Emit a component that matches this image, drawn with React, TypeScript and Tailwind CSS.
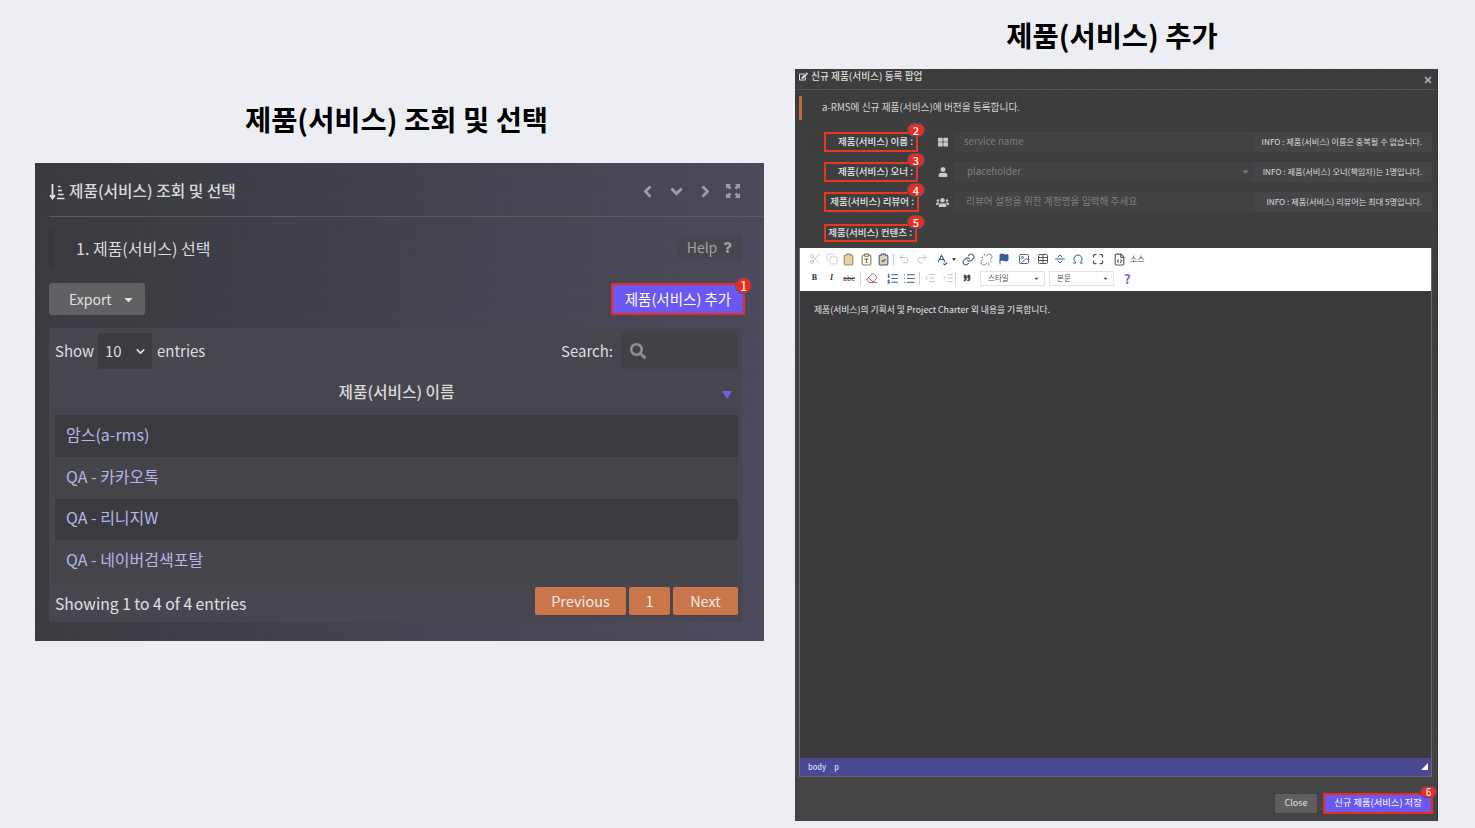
import React from "react";
import {
  Scissors, Copy, Clipboard, ClipboardType, ClipboardCheck, Undo2, Redo2, SpellCheck, Link, Unlink, Flag,
  Image, Table, SeparatorHorizontal, Omega, Maximize, FileCode, Eraser, ListOrdered, List, Outdent, Indent,
  ChevronDown, ChevronLeft, ChevronRight, Quote,
} from "lucide-react";
import { FaEdit, FaQuestion, FaSearch, FaThLarge, FaTimes, FaUser, FaUsers, FaCaretDown } from "react-icons/fa";

const FONT = "font-['Noto_Sans_CJK_KR','Noto_Sans',sans-serif]";

// Numbered red marker that sits over the highlighted controls
function Badge({ n, className }: { n: number; className: string }) {
  return (
    <span className={`absolute flex items-center justify-center rounded-full bg-[#e5301f] border border-[#4a4f86] text-white leading-none ${className}`}>
      {n}
    </span>
  );
}

function SortIcon() {
  return (
    <svg width="16" height="17" viewBox="0 0 16 17" fill="none" stroke="#e4e4e4">
      <path d="M3.5 1v14M1 12l2.5 3.5L6 12" strokeWidth="1.8" />
      <path d="M9 3.5h2.5M9 7.5h4M9 11.5h5.500M8 15.500h7.500" strokeWidth="1.6" />
    </svg>
  );
}

function ExpandIcon() {
  return (
    <svg width="14" height="14" viewBox="0 0 14 14" fill="#9c9ca4">
      <path d="M0 0h5L3.500 1.500 5.500 3.500 3.500 5.500 1.500 3.500 0 5zM14 0v5L12.500 3.500 10.500 5.500 8.500 3.500 10.500 1.500 9 0zM0 14V9l1.500 1.500 2-2 2 2-2 2L5 14zM14 14H9l1.500-1.500-2-2 2-2 2 2L14 9z" />
    </svg>
  );
}

function ProductList() {
  const rows = ["암스(a-rms)", "QA - 카카오톡", "QA - 리니지W", "QA - 네이버검색포탈"];
  return (
    <div className="w-[729px] h-[478px] bg-[radial-gradient(rgba(0,0,0,0.08)_1px,transparent_1px),linear-gradient(100deg,#3a3a3f,#4d4c5d)] bg-[length:3px_3px,100%_100%] pl-[14px] pr-[21px] text-[#d8d8d8]">
      <div className="h-[54px] mr-[-21px] pr-[24px] pt-[3px] flex items-center border-b border-[#5d5d58]">
        <SortIcon />
        <span className="ml-[4px] text-[15.75px] font-medium text-[#d9d9d9]">제품(서비스) 조회 및 선택</span>
        <div className="ml-auto flex items-center gap-[12px] text-[#9c9ca4]">
          <ChevronLeft size={17} strokeWidth={4} />
          <ChevronDown size={17} strokeWidth={4} />
          <ChevronRight size={17} strokeWidth={4} />
          <ExpandIcon />
        </div>
      </div>

      <div className="mt-[12px] h-[41px] flex items-center border-l-[5px] border-[#37373b] pl-[22px] pb-[4px]">
        <span className="text-[16px] text-[#dcdcdc]">1. 제품(서비스) 선택</span>
        <span className="ml-auto h-[25px] w-[66px] flex items-center justify-center gap-[5px] rounded bg-[#47464f] text-[14px] text-[#a2a2a2]">
          Help <FaQuestion size={11} />
        </span>
      </div>

      <div className="mt-[13px] flex items-center justify-between">
        <button className="w-[96px] h-[32px] flex items-center pl-[20px] gap-[10px] rounded-[3px] bg-[#616163] text-[14px] text-[#e0e0e0]">
          Export <FaCaretDown size={13} />
        </button>
        <button className="relative mr-[-2px] w-[134px] h-[32px] border-2 border-[#ee2a1e] bg-[#6a58f2] text-[14.5px] text-white">
          제품(서비스) 추가
          <Badge n={1} className="w-[17px] h-[17px] text-[13px] right-[-9px] top-[-8px]" />
        </button>
      </div>

      <div className="mt-[13px] h-[294px] rounded-[3px] bg-[#47464f] pl-[6px] pr-[5px]">
        <div className="pt-[5px] h-[41px] flex items-center text-[15px] text-[#dedede]">
          <span className="w-[43px]">Show</span>
          <span className="w-[54px] h-[36px] flex items-center justify-between bg-[#3c3c40] pl-[7px] pr-[5px] text-[#dcdcdc]">
            10 <ChevronDown size={13} strokeWidth={3} />
          </span>
          <span className="ml-[5px]">entries</span>
          <span className="ml-auto">Search:</span>
          <span className="ml-[8px] w-[117px] h-[36px] flex items-center rounded-[3px] bg-[#414146] pl-[9px] text-[#8f8f95]">
            <FaSearch size={16} />
          </span>
        </div>
        <div className="h-[46px] flex items-center justify-center relative text-[15.75px] font-medium text-[#dadada]">
          제품(서비스) 이름
          <span className="absolute right-[6px] top-[22px] w-0 h-0 border-x-[5px] border-x-transparent border-t-[8px] border-t-[#7660e0]" />
        </div>
        {rows.map((row, i) => (
          <div key={row} className={`h-[41.75px] flex items-center pl-[11px] pb-[4px] text-[16px] text-[#b5b7ea] ${i % 2 === 0 ? "bg-[#3b3b3f]" : "bg-[#454549]"}`}>
            {row}
          </div>
        ))}
        <div className="mt-[5px] flex items-center">
          <span className="pt-[5px] text-[15.7px] text-[#e0e0e0]">Showing 1 to 4 of 4 entries</span>
          <div className="ml-auto flex gap-[3px] text-[14.5px] text-[#f6ede6]">
            <span className="w-[91px] h-[28px] flex items-center justify-center rounded-[2px] bg-[#c8764a]">Previous</span>
            <span className="w-[41px] h-[28px] flex items-center justify-center rounded-[2px] bg-[#c8764a]">1</span>
            <span className="w-[65px] h-[28px] flex items-center justify-center rounded-[2px] bg-[#c8764a]">Next</span>
          </div>
        </div>
      </div>
    </div>
  );
}

function FormRow({
  label, n, icon, boxW, badgeCls, h, mt, input, inputPl, caret, info,
}: {
  label: string; n: number; icon?: React.ReactNode; boxW: string; badgeCls: string; h: string; mt: string; input?: string;
  inputPl?: string; caret?: boolean; info?: string;
}) {
  return (
    <div className={`flex items-center ${h} ${mt}`}>
      <div className="w-[129px] pl-[25px]">
        <div className={`relative ${h} ${boxW} border-2 border-[#e8361f] flex items-center justify-end pr-[3px] pb-[2px] text-[9.5px] font-medium text-[#e6e6e6]`}>
          {label} :
          <Badge n={n} className={`w-[18px] h-[14px] text-[11px] top-[-11px] ${badgeCls}`} />
        </div>
      </div>
      {icon && (
        <>
          <span className="w-[25px] pl-[4px] flex justify-center text-[#c9c9c9]">{icon}</span>
          <div className={`w-[301px] h-[20px] flex items-center pb-[2px] bg-[#424244] text-[9.7px] text-[#7f7f7f] ${inputPl}`}>
            <span>{input}</span>
            {caret && <FaCaretDown size={9} className="ml-auto mr-[4px]" />}
          </div>
          <div className="flex-1 h-[20px] flex items-center justify-end pb-[2px] bg-[#454547] pr-[10px] text-[8.2px] text-[#dcdcdc]">{info}</div>
        </>
      )}
    </div>
  );
}

function ToolIcon({ children, w, className = "" }: { children: React.ReactNode; w: string; className?: string }) {
  return <span className={`flex items-center justify-center shrink-0 ${w} ${className}`}>{children}</span>;
}

function Sep() {
  return <span className="w-px h-[13px] bg-[#cfcfcf] shrink-0" />;
}

function EditorToolbar() {
  return (
    <div className="h-[43px] bg-white px-[6px] pt-[4px]">
      <div className="h-[14px] flex items-center">
        <ToolIcon w="w-[17px]"><Scissors size={12} color="#c8c8c8" /></ToolIcon>
        <ToolIcon w="w-[17px]"><Copy size={12} color="#d2d2d2" /></ToolIcon>
        <ToolIcon w="w-[17px]"><Clipboard size={13} color="#a5895a" fill="#e3d3a8" /></ToolIcon>
        <ToolIcon w="w-[18px]"><ClipboardType size={13} color="#8a7750" /></ToolIcon>
        <ToolIcon w="w-[16px]"><ClipboardCheck size={13} color="#3d5a94" fill="#e3d3a8" /></ToolIcon>
        <span className="w-[2px]" />
        <Sep />
        <ToolIcon w="w-[18px]" className="ml-[1px]"><Undo2 size={12} color="#b7c4d9" /></ToolIcon>
        <ToolIcon w="w-[18px]"><Redo2 size={12} color="#c9c9c9" /></ToolIcon>
        <ToolIcon w="w-[21px]"><SpellCheck size={13} color="#33528f" /></ToolIcon>
        <span className="w-0 h-0 border-x-[2px] border-x-transparent border-t-[3px] border-t-[#444]" />
        <ToolIcon w="w-[20px]" className="ml-[2px]"><Link size={13} color="#4a5b80" /></ToolIcon>
        <ToolIcon w="w-[17px]"><Unlink size={13} color="#b39a92" /></ToolIcon>
        <ToolIcon w="w-[17px]"><Flag size={12} color="#3d5a94" fill="#3d5a94" /></ToolIcon>
        <ToolIcon w="w-[23px]"><Image size={12} color="#4e6a94" /></ToolIcon>
        <ToolIcon w="w-[16px]"><Table size={12} color="#555" /></ToolIcon>
        <ToolIcon w="w-[18px]"><SeparatorHorizontal size={12} color="#3d5a94" /></ToolIcon>
        <ToolIcon w="w-[18px]"><Omega size={12} color="#2f5597" /></ToolIcon>
        <ToolIcon w="w-[21px]"><Maximize size={12} color="#3c5070" strokeWidth={2.5} /></ToolIcon>
        <ToolIcon w="w-[22px]"><FileCode size={13} color="#555" /></ToolIcon>
        <span className="text-[8px] text-[#444]">소스</span>
      </div>
      <div className="mt-[5px] h-[14px] flex items-center">
        <ToolIcon w="w-[17px]"><b className="text-[8px] text-[#333] font-['Liberation_Serif',serif]">B</b></ToolIcon>
        <ToolIcon w="w-[17px]"><i className="text-[8px] text-[#333] font-['Liberation_Serif',serif] font-bold">I</i></ToolIcon>
        <ToolIcon w="w-[18px]"><span className="text-[7px] text-[#444] line-through">abc</span></ToolIcon>
        <span className="w-[2px]" />
        <Sep />
        <ToolIcon w="w-[22px]"><Eraser size={12} color="#c4605a" /></ToolIcon>
        <ToolIcon w="w-[18px]"><ListOrdered size={13} color="#3d5a94" /></ToolIcon>
        <ToolIcon w="w-[16px]"><List size={13} color="#3d5a94" /></ToolIcon>
        <span className="w-[2px]" />
        <Sep />
        <ToolIcon w="w-[20px]"><Outdent size={12} color="#bcc6d6" /></ToolIcon>
        <ToolIcon w="w-[15px]"><Indent size={12} color="#c8c8c8" /></ToolIcon>
        <Sep />
        <ToolIcon w="w-[22px]"><Quote size={8} color="#444" fill="#444" /></ToolIcon>
        <span className="ml-[2px] w-[65px] h-[15px] flex items-center border border-[#e2e2e2] pl-[7px] pr-[4px] text-[7.5px] text-[#555]">
          스타일 <FaCaretDown size={7} className="ml-auto" />
        </span>
        <span className="ml-[4px] w-[65px] h-[15px] flex items-center border border-[#e2e2e2] pl-[7px] pr-[4px] text-[7.5px] text-[#555]">
          본문 <FaCaretDown size={7} className="ml-auto" />
        </span>
        <span className="ml-[10px] text-[13px] font-bold leading-none text-[#8a5fc0]">?</span>
      </div>
    </div>
  );
}

function RegisterPopup() {
  return (
    <div className="w-[643px] h-[752px] flex flex-col border-r border-[#333] bg-[radial-gradient(rgba(0,0,0,0.1)_1px,transparent_1px),linear-gradient(#3d3d3d,#454545)] bg-[length:3px_3px,100%_100%] text-[#dcdcdc]">
      <div className="h-[21px] shrink-0 flex items-center border-b border-[#555] pl-[4px] pr-[4px] pb-[6px] text-[9.7px] font-medium">
        <FaEdit size={9} className="mr-[3px]" />
        신규 제품(서비스) 등록 팝업
        <FaTimes size={10} className="ml-auto mt-[8px] text-[#aaa]" />
      </div>
      <div className="mt-[6px] ml-[4px] h-[24px] flex items-center border-l-[3px] border-[#bb6b3f] pl-[20px] pb-[2px] text-[9.7px] text-[#d4d4d4]">
        a-RMS에 신규 제품(서비스)에 버전을 등록합니다.
      </div>

      <div className="pl-[4px] mr-[5px]">
        <FormRow mt="mt-[12px]" h="h-[20px]" boxW="w-[94px]" badgeCls="right-[-9px]" n={2} label="제품(서비스) 이름" icon={<FaThLarge size={10} />} input="service name" inputPl="pl-[11px]" info="INFO : 제품(서비스) 이름은 중복될 수 없습니다." />
        <FormRow mt="mt-[10px]" h="h-[20px]" boxW="w-[94px]" badgeCls="right-[-9px]" n={3} label="제품(서비스) 오너" icon={<FaUser size={10} />} input="placeholder" inputPl="pl-[14px]" caret info="INFO : 제품(서비스) 오너(책임자)는 1명입니다." />
        <FormRow mt="mt-[10px]" h="h-[20px]" boxW="w-[95px]" badgeCls="right-[-8px]" n={4} label="제품(서비스) 리뷰어" icon={<FaUsers size={13} />} input="리뷰어 설정을 위한 계정명을 입력해 주세요" inputPl="pl-[13px]" info="INFO : 제품(서비스) 리뷰어는 최대 5명입니다." />
        <FormRow mt="mt-[12px]" h="h-[18px]" boxW="w-[93px]" badgeCls="right-[-10px]" n={5} label="제품(서비스) 컨텐츠" />
      </div>

      <div className="mt-[6px] ml-[4px] h-[529px] w-[633px] flex flex-col border-x border-b border-[#6a6a6a]">
        <EditorToolbar />
        <div className="flex-1 bg-[#3a3a3c] px-[14px] pt-[12px] text-[8.8px] text-[#e6e6e6]">
          제품(서비스)의 기획서 및 Project Charter 외 내용을 기록합니다.
        </div>
        <div className="h-[18px] flex items-center gap-[8px] bg-[#4c4893] pl-[8px] pr-[3px] pb-[1px] text-[7.5px] font-medium text-[#dcdcee]">
          <span>body</span>
          <span>p</span>
          <span className="ml-auto w-0 h-0 border-b-[7px] border-l-[7px] border-b-white border-l-transparent" />
        </div>
      </div>

      <div className="mt-[16px] pr-[4px] flex items-center justify-end gap-[6px]">
        <button className="w-[42px] h-[19px] pb-[1px] rounded-[2px] bg-[#5e5e5e] text-[9px] text-[#e0e0e0]">Close</button>
        <button className="relative w-[110px] h-[21px] pb-[1px] border-2 border-[#ee2a1e] bg-[#6a58f2] text-[9.3px] text-white">
          신규 제품(서비스) 저장
          <Badge n={6} className="w-[17px] h-[12px] text-[10px] right-[-6px] top-[-9px]" />
        </button>
      </div>
    </div>
  );
}

export default function App() {
  return (
    <div className={`w-[1475px] h-[828px] overflow-hidden bg-[#eceef3] flex items-start pl-[35px] ${FONT}`}>
      <div className="w-[729px] pt-[98px]">
        <h2 className="h-[65px] pr-[6px] text-center text-[28.5px] leading-[42px] font-bold text-black">제품(서비스) 조회 및 선택</h2>
        <ProductList />
      </div>
      <div className="ml-[31px] w-[643px] pt-[14px]">
        <h2 className="h-[55px] pr-[9px] text-center text-[28.5px] leading-[42px] font-bold text-black">제품(서비스) 추가</h2>
        <RegisterPopup />
      </div>
    </div>
  );
}
